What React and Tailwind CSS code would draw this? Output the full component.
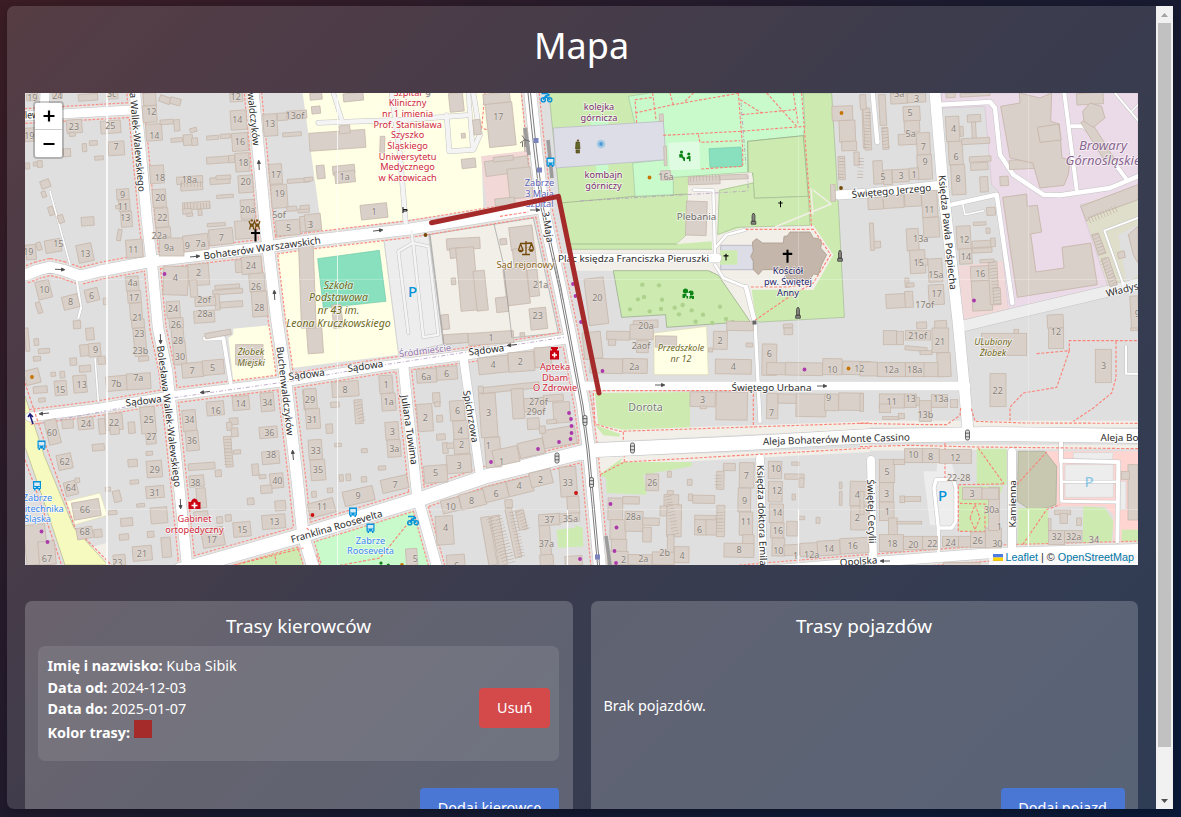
import React from "react";

// Map sections: every section keeps its own local units (three per pixel).
const at = (x, y) => `translate(${x} ${y}) scale(0.33333)`;

const AREAS = [
  { o: [20, 88], a: [
    ["#ffffe5", "640,722 748,712 760,730 640,740"],
  ] },
  { o: [300, 88], a: [
    ["#ffffe5", "8,15 66,430 550,365 545,205 680,190 662,15"],
    ["#f3d8d8", "543,205 680,188 700,335 560,358"],
    ["#ffffe5", "-70,495 250,455 295,800 -24,840"],
    ["#88e0be", "53,512 238,487 258,640 70,660", "#74c9a8"],
    ["#ededee", "252,457 385,440 432,768 296,798", "#c9c9c9"],
    ["#f2efe9", "388,440 700,390 775,735 430,770", "#a5a5a5"],
  ] },
  { o: [580, 88], a: [
    ["#f2efe9", "-25,478 415,470 520,600 540,705 505,702 395,550 -15,548"],
    ["#cdebb0", "-93,15 755,15 775,350 793,688 525,703 505,600 400,530 400,484 -25,484 -60,345", "#a3b894"],
    ["#cdebb0", "-60,345 165,325 325,318 320,440 290,468 -35,468", "#9aa88c"],
    ["#c8facc", "145,25 210,15 670,15 675,115 670,143 503,160 503,253 280,268 280,320 165,325 158,225 255,215 250,100 165,108", "#a5c4a0"],
    ["#cdebb0", "503,160 670,143 685,325 523,331 518,255 505,253", "#8fa283"],
    ["#c8facc", "30,90 85,90 85,255 50,255"],
    ["#dddde8", "-80,120 250,100 258,215 -72,240", "#b7b7c4"],
    ["#dffce2", "265,165 358,160 360,243 270,247"],
    ["#88e0be", "387,182 483,177 487,235 390,238", "#74c9a8"],
    ["#f2efe9", "325,268 515,253 520,283 418,305 413,440 480,420 497,418 497,386 520,386 520,416 700,412 760,500 700,606 515,605 528,700 505,700 400,550 395,460 290,468 320,440"],
    ["#cdebb0", "418,307 520,285 523,331 685,325 690,412 470,418 413,440", "#a9bd98"],
    ["#dddde8", "422,472 520,472 520,545 422,545", "#a9a9b8"],
    ["#cdebb0", "440,487 472,487 472,530 420,530 420,487"],
    ["#cdebb0", "100,548 385,548 415,562 510,700 260,718 257,680 125,688", "#8fa283"],
  ] },
  { o: [860, 88], a: [
    ["#ebdbe8", "245,15 834,15 834,310 660,350 745,600 445,675 430,520 415,310 395,290 375,55 245,60", "#d9c4d4"],
    ["#dfdecb", "663,352 834,290 834,580 748,602"],
    ["#e0dfdf", "775,440 834,410 834,560 800,590"],
    ["#f2d9d9", "295,535 428,518 445,675 310,700"],
  ] },
  { o: [20, 328], a: [
    ["#ffffe5", "625,30 660,5 770,-5 770,145 640,160"],
    ["#ffffe5", "138,520 240,495 262,562 165,590", "#e0dcb0"],
    ["#f2efe9", "180,665 260,645 262,712 215,712"],
    ["#cdebb0", "570,712 840,640 862,712"],
  ] },
  { o: [300, 328], a: [
    ["#c8facc", "40,640 350,545 400,712 60,712"],
    ["#cdebb0", "770,605 845,598 850,655 775,660"],
  ] },
  { o: [580, 328], a: [
    ["#ffffe5", "222,15 380,-5 385,140 222,140", "#dcd8b0"],
    ["#f2efe9", "40,185 330,192 870,280 870,302 50,342"],
    ["#dfdfdf", "330,190 870,190 870,280 330,298"],
    ["#cdebb0", "45,195 330,192 330,298 130,305 55,290"],
    ["#cdebb0", "45,290 120,318 118,326 70,322"],
    ["#f2efe9", "50,388 870,358 870,372 135,410 60,445"],
    ["#cdebb0", "58,440 130,388 120,402 335,402 335,415 190,440 200,500 80,495 78,450"],
    ["#cdebb0", "-15,590 8,600 10,650 0,660"],
  ] },
  { o: [860, 328], a: [
    ["#f2efe9", "0,278 834,278 834,298 0,298"],
    ["#f2efe9", "0,350 834,350 834,362 0,368"],
    ["#cdebb0", "350,362 440,362 440,470 350,470"],
    ["#ededee", "190,430 230,430 232,405 275,405 290,455 290,600 210,590"],
    ["#cdebb0", "297,475 430,475 375,610 297,610"],
    ["#ffd5d2", "555,370 834,370 834,640 760,645 760,560 735,535 590,535 590,415"],
    ["#c8c8b0", "475,370 555,370 590,415 588,530 560,540 510,545 472,520", "#a8a894"],
    ["#dfdfdf", "565,540 668,535 668,650 565,650"],
    ["#cdebb0", "475,540 565,540 565,650 472,660"],
    ["#cdebb0", "670,535 735,540 760,580 755,640 668,650"],
    ["#cdebb0", "785,605 834,605 834,640 785,640"],
    ["#ededee", "615,410 760,410 760,508 615,508", "#d4d4d4"],
    ["#ededee", "640,374 760,374 756,395 640,392", "#d4d4d4"],
    ["#ededee", "780,460 798,460 798,545 780,545", "#d4d4d4"],
  ] },
];

// Streets in page pixels: [width, points, hasSidewalk, colour]
const STREETS = [
  [9, "25,116 131,110", 1],
  [9, "45,93 44,114", 0],
  [11, "963,326 1000,317 1138,284", 0, "#ededed"],
  [10, "740,573 860,563 993,553 1138,549", 1],
  [10.5, "135,93 147,221 152,265 158,328 167,371 180,495 187,565", 1],
  [11.5, "253,93 265,221 277,321 283,361 297,478 303,535 313,567", 1],
  [9, "30,417 100,408 170,396 290,381 383,366 467,355 566,339", 1],
  [10, "403,363 417,495 437,567", 1],
  [8.5, "463,355 480,475", 0],
  [8, "760,458 763,567", 0],
  [8, "871,460 873,560", 0],
  [8, "1012,452 1012,558", 0],
  [9, "838,195 870,193 942,185", 0],
  [9, "553,258 717,258", 0],
  [9, "580,386 700,386 966,386", 0],
  [11, "935,93 943,188 958,321 965,395 968,431", 0],
  [11, "25,275 38,270 50,267 63,270 80,276 100,271 153,261 267,247 300,242 410,229 545,207", 1],
  [14, "180,570 293,538 423,498 487,476 583,452", 1],
  [14, "583,453 597,450 747,443 870,436 990,434 1140,436", 0],
  [12, "530,90 536,150 543,208 560,288 570,335 583,405 589,450 595,515 600,568", 1],
];

const SERVICE = [
  [4.5, [860, 88], "240,50 390,42 405,60 420,200 460,260 550,320 600,322 750,300 834,265"],
  [4, [860, 88], "650,305 613,15"],
  [4, [860, 88], "635,115 670,115 700,140 800,275"],
  [2, [860, 88], "765,15 834,98"],
  [1.5, [860, 88], "815,70 834,50"],
  [4.5, [860, 88], "275,350 410,320 457,645"],
  [1.6, [860, 88], "308,348 315,380 370,368"],
  [2, [860, 88], "834,390 733,428 790,590"],
  [4.5, [860, 88], "38,15 52,162"],
  [4, [20, 328], "555,32 610,30 632,165"],
  [1.6, [20, 328], "225,90 235,220"],
  [1.6, [20, 88], "90,310 150,530"],
  [2.2, [20, 88], "170,575 183,660 175,690"],
  [4.5, [300, 88], "55,104 320,95 500,82"],
  [4, [300, 88], "100,15 125,95"],
  [4.5, [300, 88], "275,15 300,200 317,405"],
  [4.5, [300, 88], "440,82 448,190 520,185 540,140 520,15"],
  [4, [300, 88], "505,15 518,180"],
  [2.6, [300, 88], "335,430 338,465 295,490 325,735"],
  [2.6, [300, 88], "338,465 385,475 415,740 370,748 340,470"],
  [2.6, [580, 88], "342,305 400,307 405,500"],
  [2.6, [580, 88], "405,480 440,440 497,425"],
  [2.6, [580, 88], "405,530 430,570 497,597"],
  [4.5, [580, 88], "498,597 525,705"],
  [3.4, [580, 328], "525,-20 540,280"],
  [4, [860, 328], "603,345 603,398 775,402 772,640"],
  [3, [860, 328], "603,400 605,520 770,522"],
  [2.5, [860, 328], "605,461 770,461"],
  [3.5, [860, 328], "235,670 235,600 222,480 228,455 280,455 288,480 288,580 275,600 235,600"],
  [2, [860, 328], "798,55 798,137 834,137"],
];

const FOOT = [
  { o: [300, 88], p: ["555,15 545,120 560,125", "600,385 685,372"] },
  { o: [580, 88], p: [
    "665,15 695,420", "250,142 480,130 675,115", "355,140 360,163 480,158", "475,15 488,180 488,235 362,243",
    "218,15 228,95", "170,105 165,35 218,28", "165,75 280,50 480,15", "270,15 280,50", "480,35 545,75", "485,80 645,65", "560,15 650,115", "640,15 655,110",
    "315,40 340,15", "497,424 700,424 752,500 700,585 625,597 510,597", "525,697 625,628 690,590"] },
  { o: [580, 328], p: ["40,188 520,188 520,298", "40,195 45,288 120,310 870,285", "130,312 130,340", "60,440 133,402 870,360", "133,402 133,385"] },
  { o: [860, 328], p: ["0,286 200,290 260,290 300,262 302,240", "334,242 345,280 500,285 834,286", "0,356 150,352 350,357 834,362", "530,77 628,68 628,38 834,38", "628,68 590,178 490,195 450,237 450,285", "768,40 768,150 755,195 700,240 640,280", "255,345 255,450", "355,360 432,468", "295,470 430,468", "295,475 295,610 375,610 375,528 300,526", "330,570 345,530 360,570 345,605 330,570", "470,470 560,372", "488,650 560,545 600,530"] },
  { o: [300, 328], p: ["345,560 240,690 120,712", "50,680 60,712", "20,600 30,610"] },
  { o: [20, 328], p: ["15,165 75,345 165,600 275,712", "15,395 60,520 125,712", "640,712 850,660", "765,685 770,712"] },
];

const B = [
  { o: [20, 88], r: -4, b: "20,18,34,20;97,15,30,18;175,18,58,20;262,15,32,18;140,95,46,40;148,133,18,12;242,98,60,38;265,160,48,42;208,158,24,14;187,167,13,24;224,204,26,12;130,182,22,24;15,120,32,40;15,225,14,18;40,222,12,12;52,218,15,20;62,276,28,24,-20;65,310,13,18,-20;86,356,15,26,-18;114,381,17,24,-18;184,387,38,26;290,303,37,32;296,335,34,34;303,370,33,47;287,352,16,10;292,424,12,34,10;318,455,50,54;75,455,48,38,-10;50,463,14,24,-18;18,470,30,45;172,468,46,54,-12;50,578,42,54,-14;128,622,48,40,-14;196,602,40,38,-14;50,642,14,34,-18;250,630,12,20;318,565,38,44;323,608,40,36;330,645,36,50;335,694,38,26;370,15,38,38;368,53,42,50;378,108,48,50;390,232,42,54;398,304,40,54;405,360,40,58;410,418,42,30;418,450,74,54,0;490,440,75,48,-7;567,422,72,48,-6;645,398,60,54,-4;418,25,34,20,20;450,30,32,20,15;420,95,40,14;462,95,17,34;510,120,20,12,-14;453,150,35,12;490,140,28,32;515,150,18,22;560,143,36,12;601,138,30,13;560,206,66,20;626,202,18,22;570,268,60,20;588,262,44,12;470,265,78,22;482,285,66,22;488,342,82,22;488,362,28,16;500,375,18,10;534,364,12,18;590,320,50,10;562,405,54,10;630,15,38,26;632,67,48,58;636,135,48,54;646,195,42,56;655,262,44,52;662,335,42,58;730,78,42,66;772,75,32,22;800,68,60,24;788,133,56,12;748,228,38,60;754,290,48,70;802,272,68,12;800,355,30,14;834,362,34,12;768,396,72,46;840,385,32,46;430,535,74,86,2;505,528,62,64;510,575,22,52;646,515,30,38;665,506,60,52;688,556,46,54;696,610,46,76;585,590,74,12;578,604,90,14;585,618,14,48;600,640,68,18;525,628,62,26;522,668,62,36;440,640,40,50;448,690,42,30;160,698,22,24" },
  { o: [300, 88], r: -6, b: "30,15,36,20;130,15,60,24;35,55,26,22;28,130,168,54,-4;118,112,32,24;50,232,24,40;98,232,66,26;105,250,60,34;182,348,80,44;240,145,14,50,2;448,15,42,56;550,15,80,32;562,45,80,130;485,212,42,28;484,136,12,14;520,95,22,45;555,212,130,45,-8;580,205,60,14;625,240,70,90;585,330,60,22;440,450,100,34,-3;450,480,30,30;475,478,54,190,-5;525,548,34,120;600,452,20,18;630,415,70,70,-7;640,480,68,60;615,540,70,110,-7;685,545,30,80;588,628,36,44;690,660,50,64;0,470,44,250,-2;98,650,28,70;454,570,13,20;425,680,22,44;12,268,26,12;15,378,48,50;0,352,28,12;672,120,12,70,-3" },
  { o: [580, 88], r: -2, b: "756,54,62,44;778,97,48,65;785,160,45,28;848,60,16,120;843,28,12,30;775,205,20,70;822,192,16,40;752,290,14,50;318,340,62,102,2;325,265,95,24;420,260,82,14;238,78,12,22;252,175,8,58;242,248,30,28;20,570,58,140,-7;160,697,74,22;450,708,60,12;610,708,28,12" },
  { o: [860, 88], r: -3, b: "92,15,50,32;142,15,55,28;130,55,50,44;133,98,46,34;115,138,62,32;170,134,40,66;172,200,44,74;40,218,28,70;70,246,26,44;97,244,50,38;148,240,28,34;12,60,20,126;0,20,18,44;58,20,20,92;67,118,18,66;258,85,40,76;266,160,42,70;274,230,42,90;300,115,10,30;322,80,40,22;336,102,12,60;305,150,84,18;328,205,65,16;332,224,52,22;360,266,24,46;420,265,25,28;380,358,26,24;24,328,46,36;70,322,62,38;134,315,50,40;186,308,46,80;190,388,48,60;140,422,36,66;150,486,46,70;176,512,28,20;205,512,42,70;30,405,12,82;42,460,20,20;135,570,12,28;140,585,22,12;206,590,46,60;78,618,58,42;135,610,24,48;170,702,30,20;224,698,36,24;290,414,42,70;298,482,38,46;336,458,58,20;392,450,14,26;338,480,58,14;340,402,38,10;378,420,12,16;332,534,55,46;336,578,60,90;388,520,26,130;400,600,22,50;360,514,42,10;258,15,28,14;300,15,90,10;562,680,48,40;812,624,24,100;448,215,78,28;650,15,80,34;700,85,28,150,-32" },
  { o: [20, 328], r: -5, b: "15,0,12,70;42,32,14,20;40,85,22,14;55,62,34,14;15,124,44,44,-14;40,175,42,20;56,210,20,12;93,133,14,12;120,130,14,20;150,90,20,22;178,112,34,20;104,158,36,44;160,142,40,52;198,0,24,36;180,50,28,34;206,46,36,40;234,85,22,24;258,144,64,44;320,136,72,48,-3;342,0,36,84;356,85,30,14;455,0,36,42;460,40,38,70;486,104,64,44;548,96,64,44;555,10,78,16,-10;647,50,82,60,0;80,275,36,74,-14;126,275,34,26;174,268,46,36;236,272,20,46;256,256,52,50;270,295,28,24;325,282,20,34;362,236,44,80;378,316,30,32;112,378,44,46,-12;134,460,38,42,-14;165,450,14,14;217,348,36,20;324,394,28,22;380,398,46,50;378,370,20,12;378,474,54,36;330,456,26,12;256,478,16,12;280,488,22,34,-14;265,548,26,12;350,527,24,10;392,538,50,48;302,570,36,24;298,618,28,18;382,610,20,18;158,518,82,52,-10;170,598,48,34,-10;222,604,24,24;425,628,28,60;338,654,58,44;280,680,36,32;488,246,40,64;498,308,38,60;560,220,52,42;638,204,50,42;722,194,40,56;628,270,26,20;620,283,16,24;634,300,20,26;614,325,22,92;640,366,22,12;718,296,54,34;726,370,52,38;696,408,20,34;718,440,20,12;750,436,40,44;722,472,34,24;505,405,80,20,-4;586,426,18,20;508,442,44,34;530,480,28,60;546,600,66,56,-10;640,582,52,44;726,560,70,42;682,510,20,20;590,566,18,20;616,560,18,20;765,518,32,30;522,550,42,20;15,590,65,120,-6;56,640,50,70;850,185,26,60" },
  { o: [300, 328], r: -4, b: "22,0,46,76;12,182,38,60;18,242,42,60;26,335,40,60;32,395,44,62;96,160,80,46;92,222,26,16;164,215,24,72;78,288,20,28;104,346,20,10;184,362,18,12;238,142,40,54;245,196,42,52;256,282,40,54;262,335,40,52;130,482,92,44,-13;244,448,80,40,-13;26,518,78,44,-15;118,440,12,20;138,438,14,20;184,446,16,16;235,414,22,12;35,490,14,18;82,480,16,14;350,122,60,42;410,115,62,40;352,228,46,82;398,194,22,32;404,222,16,14;410,262,18,20;410,318,26,18;428,344,16,32;440,345,24,16;450,218,44,60;460,278,44,56;462,333,46,44;440,380,74,55;372,412,70,52;535,86,90,50,-6;625,72,78,58;704,58,50,60;548,170,170,18,-6;535,175,15,20;540,196,50,132;556,328,46,90;580,360,76,48,-12;656,338,76,46,-13;728,300,100,54,-10;636,182,36,90;672,210,60,40;730,200,60,20;760,222,50,62;682,270,36,34;740,275,30,12;718,294,18,22;425,512,56,40,-14;480,492,76,46,-14;552,470,72,46,-14;622,452,76,46,-14;690,428,66,44,-14;780,416,50,90;802,505,36,54;408,564,52,86;440,680,54,34;318,662,34,50;554,566,26,146,-10;584,562,26,150,-10;630,540,20,150,-12;652,545,24,60,-12;615,515,22,24;716,558,64,34;778,556,60,26;720,592,32,90;720,680,40,32;795,684,52,28;430,18,74,28;505,12,136,36,-4;660,14,14,12" },
  { o: [580, 328], r: 1, b: "10,12,55,80,-6;80,10,70,26;85,34,22,18;30,92,98,44;128,92,74,44;150,-10,70,44;170,38,35,36;226,24,64,34;400,10,42,54;386,60,12,12;498,45,20,12;406,94,108,44;612,0,26,20;440,-20,80,28;546,48,44,94;560,104,60,36;616,104,112,38;728,92,58,48;788,100,84,40;330,192,76,44;408,192,94,84;360,234,20,8;560,196,34,76;594,198,56,28;648,198,90,68;734,198,42,50;776,195,74,52;198,438,38,50;262,430,12,18;322,454,14,18;430,406,36,22;410,430,22,54;338,502,66,24;325,498,12,20;478,404,44,76;474,480,38,72;478,552,40,70;488,620,34,30;432,646,90,42;344,562,64,18;344,575,36,46;378,575,32,46;410,532,24,94;262,488,18,14;252,500,44,34;260,530,44,96;240,534,20,30;262,620,20,72;84,510,44,66;128,506,50,22;90,575,48,60;135,550,54,60;188,570,50,22;188,598,26,44;94,634,46,42;82,670,62,40;145,680,72,30;217,672,66,38;283,656,44,48;565,400,40,52;565,460,42,62;568,528,42,56;572,584,40,46;576,630,38,54;635,402,22,10;614,438,58,16;656,450,16,28;636,498,10,18;620,580,32,44;656,565,18,10;708,568,12,18;778,462,8,20;778,490,8,42;810,460,60,74;812,534,56,72;612,650,46,32,-3;660,645,54,40,-3;712,638,68,44,-3;780,630,86,46,-3" },
  { o: [860, 328], r: 0, b: "70,8,40,42;110,10,20,40;135,56,66,12,5;136,8,76,28;180,68,36,12;216,0,50,74;232,74,40,72,-3;0,102,52,42;52,104,84,42;136,104,58,42;192,104,42,42;0,196,10,54;58,198,75,42;58,228,34,26;133,198,36,40;168,208,10,24;178,218,36,62;214,200,48,38;271,215,22,24;68,266,50,8;115,256,18,16;365,16,135,66;462,4,14,12;566,0,45,62;390,137,48,99;706,64,48,100;812,0,22,8;58,394,46,70;100,394,34,16;58,464,42,58;58,522,44,56;86,570,26,60;110,580,75,8;120,504,14,20;134,506,48,14;134,362,54,42;188,362,50,42;238,364,96,42;58,620,72,50;130,625,60,40;188,625,44,40;248,625,48,32;296,625,36,32;332,612,44,46;376,600,48,60;386,478,32,130;308,478,58,36;366,480,50,34;566,608,48,42;614,608,52,36;565,572,8,36;584,546,48,14;600,556,22,30;650,570,14,22;804,410,30,166;784,430,24,24;250,704,110,14;0,490,12,70" },
];

const POLY = [
  [[580, 88], "517,462 530,452 548,465 610,465 612,445 622,444 630,432 690,432 700,450 716,452 725,465 722,480 740,500 725,530 715,560 700,558 690,575 640,575 620,572 612,545 548,545 535,560 520,545 520,520 512,505 520,490", "#c4b6ab", "#ad9b8d"],
  [[860, 88], "422,55 480,45 478,15 540,30 575,15 572,100 598,108 606,210 630,215 625,260 612,292 540,300 518,225 450,210", "#d9d0c9", "#c4b3a6"],
  [[860, 88], "532,118 596,108 604,156 540,163", "#d9d0c9", "#c4b3a6"],
  [[860, 88], "428,328 500,318 502,355 532,352 545,432 512,438 528,552 612,540 606,478 692,465 712,590 472,628", "#d9d0c9", "#c4b3a6"],
  [[860, 88], "668,70 690,45 725,55 735,90 700,118 672,100", "#d9d0c9", "#c4b3a6"],
  [[860, 88], "662,355 834,290 834,335 690,388 680,400", "#d9d0c9", "#c4b3a6"],
  [[860, 88], "695,440 715,435 738,495 716,502", "#d9d0c9", "#c4b3a6"],
  [[860, 88], "724,512 745,508 772,590 750,596", "#d9d0c9", "#c4b3a6"],
  [[860, 88], "772,494 792,488 796,508 776,512", "#d9d0c9", "#c4b3a6"],
  [[860, 88], "805,440 834,415 834,525 820,500", "#d9d0c9", "#c4b3a6"],
];

// House numbers: x, y, text
const NUM = [
  [[20, 88], "37,30,19;112,22,24;275,18,3c;162,117,23;271,113,25;288,177,7;28,142,19;308,320,9;309,356,11;316,388,13;115,466,15;25,492,19;196,497,13;340,484,11;73,606,10;152,641,8;215,624,6;338,584,4a;342,628,17;352,690,21;394,70,12;403,143,14;420,270,18;421,329,20;427,388,22;418,444,22a;447,480,9a;502,474,9;542,467,7a;604,449,7;508,276,18a;647,27,12;652,95,14;660,162,16;670,225,18;677,280,20;683,365,20a;750,107,13;825,82,13of;768,259,17;779,318,19;777,381,5of;806,418,5;868,410,3;466,569,4;536,554,2;552,636,2of;555,678,28a;459,662,24;468,709,26;693,534,24;708,597,26;718,658,28"],
  [[300, 88], "134,265,1a;222,371,1;32,409,3;595,86,17;722,591,21a;713,684,23;384,18,9"],
  [[580, 88], "258,266,16a;52,628,20;198,713,20a"],
  [[860, 88], "118,18,3a;170,32,3;150,73,5;152,138,5a;190,176,7;195,222,9;69,266,5;123,264,3;162,260,1;281,123,4;288,207,6;294,272,8;208,366,11;182,453,13a;176,523,15;228,560,15a;230,618,17;194,649,17of;313,456,12;318,505,14;361,556,16;832,678,9"],
  [[20, 328], "227,66,9;358,16,23;361,69,23b;474,38,28;480,86,30;516,127,7;578,118,5;121,184,15;185,170,13;289,168,7b;355,150,7a;96,314,60;198,288,24;282,283,22;386,275,25;394,325,27;134,402,62;153,479,64;404,425,29;404,493,31;195,546,66;194,611,68;81,692,67;366,676,21;292,703,23;508,275,34;516,337,36;587,248,16;662,226,14;742,223,34;748,314,36;753,380,38;772,459,40;526,465,38;575,634,17;667,606,15;763,582,13"],
  [[300, 328], "30,215,29;36,275,31;47,367,33;54,426,35;135,184,8;258,169,1;266,222,1a;277,311,3;283,362,3a;174,503,9;285,471,7;66,536,11;379,146,6a;440,138,6;376,270,2;473,247,6;481,307,4;485,350,2;477,412,3;407,433,5;579,111,4;661,100,2;566,255,3;715,220,27of;708,250,29of;565,354,1;605,400,1;452,536,10;515,517,8;588,498,6;657,473,4;722,456,2;803,464,33;748,575,37;811,571,35a;739,648,37a;437,600,4;346,692,5;470,712,6;573,28,1"],
  [[580, 328], "183,54,2aof;163,117,2a;420,39,2;460,116,4;568,76,6;757,124,10;838,123,12;368,215,3;746,208,9;575,255,7;217,464,26;499,443,7;494,519,9;498,580,11;477,665,8;359,604,6;160,566,28a;131,694,2;190,692,2a;254,674,2b;306,682,4;588,421,10;591,487,12;592,555,14;594,607,16;595,668,10;647,682,1;695,679,12a;747,662,14;818,653,16;832,499,4;832,570,2"],
  [[860, 328], "173,22,21of;240,40,21;94,125,12a;164,125,18a;588,12,12;95,221,11;152,211,13;243,211,13a;196,261,13b;413,187,22;731,112,3;160,380,10;212,385,8;286,389,12;296,449,22-28;81,431,5;80,497,3;82,551,1;336,497,3;395,546,30a;418,596,1;97,647,18;160,649,20;217,646,22;272,643,24;353,638,26;412,646,30;590,627,32;641,627,32a;702,634,34"],
];

// Street names: x1,y1 -> x2,y2 baseline in page pixels
const NAMES = [
  ["lew", 25, 118.5, 39, 118],
  ["Bohaterów Warszawskich", 204, 259.5, 321, 243.5],
  ["a Wallek-Walewskiego", 129.5, 93, 138.5, 192],
  ["waldczyków", 247.5, 93, 253, 146],
  ["Bolesława Wallek-Walewskiego", 157, 346, 174.5, 487.5],
  ["Buchenwaldczyków", 276.5, 347, 287, 436],
  ["Sądowa", 126, 406.5, 162, 402],
  ["Sądowa", 289, 380, 325, 375.5],
  ["Sądowa", 348, 372, 383.5, 367],
  ["Sądowa", 469, 355.5, 504.5, 351],
  ["Franklina Roosevelta", 292, 543, 383, 516.5],
  ["Juliana Tuwima", 401, 395.5, 411, 465],
  ["Spichrzowa", 463, 391, 472, 443],
  ["3-Maja", 542, 212, 547, 243],
  ["Plac księdza Franciszka Pieruszki", 558, 262, 709, 262],
  ["Księdza Pawła Pośpiecha", 938.5, 175.5, 950, 290],
  ["Świętego Jerzego", 852, 198, 931.5, 191],
  ["Świętego Urbana", 731.5, 391, 811.5, 391],
  ["Aleja Bohaterów Monte Cassino", 763, 445, 910, 440.5],
  ["Aleja Bo", 1100.5, 441, 1138.5, 441],
  ["Władys", 1107, 297, 1139, 289],
  ["Księdza doktora Emila", 757, 465, 760, 566],
  ["Świętej Cecylii", 867, 479.5, 869, 543.5],
  ["Kamienna", 1016, 527.5, 1016, 480],
  ["Opolska", 840, 566, 877.5, 563.5],
];

// Points of interest: colour, size, leading, centre x, first baseline, lines, italic
const POIS = [
  ["#d0283c", 9.2, 10.67, 407.6, 95.6, ["Szpital", "Kliniczny", "nr 1 imienia", "Prof. Stanisława", "Szyszko", "Śląskiego", "Uniwersytetu", "Medycznego", "w Katowicach"]],
  ["#d0283c", 9.2, 10.6, 555, 370, ["Apteka", "Dbam", "O Zdrowie"]],
  ["#d0283c", 9.2, 10.6, 194.5, 522, ["Gabinet", "ortopedyczny"]],
  ["#8a6420", 9.2, 10.6, 525.5, 268, ["Sąd rejonowy"]],
  ["#5b61b5", 9.2, 10.6, 539.5, 186, ["Zabrze", "3 Maja", "Szpital"]],
  ["#3a88f0", 9.2, 10.6, 370.5, 543.5, ["Zabrze", "Roosevelta"]],
  ["#3a88f0", 9.2, 10.6, 37.5, 501, ["Zabrze", "Politechnika", "Śląska"]],
  ["#9078b0", 9.2, 10.6, 425.5, 354, ["Śródmieście"], 0, -7],
  ["#6f6a1c", 10.5, 12.9, 338.5, 288.5, ["Szkoła", "Podstawowa", "nr 43 im.", "Leona Kruczkowskiego"], 1],
  ["#6f6a1c", 9.1, 10.6, 251, 355, ["Żłobek", "Miejski"], 1],
  ["#6f6a1c", 9, 10.8, 681, 351, ["Przedszkole", "nr 12"], 1],
  ["#6f6a1c", 9, 10.6, 993, 345, ["ULubiony", "Żłobek"], 1],
  ["#7a2c70", 9.2, 10.6, 599, 110.3, ["kolejka", "górnicza"]],
  ["#7a2c70", 9.2, 10.6, 603.5, 178, ["kombajn", "górniczy"]],
  ["#6d6a68", 9.8, 10.6, 696.5, 220.3, ["Plebania"]],
  ["#24246b", 9.2, 10.8, 788, 274, ["Kościół", "pw. Świętej", "Anny"]],
  ["#7a7a78", 10.6, 12, 645.5, 411, ["Dorota"]],
  ["#8a6590", 13.1, 15.6, 1103, 149.5, ["Browary", "Górnośląskie"], 1],
];

const DOTS = "164.5,274,#ac39ac;974,300.5,#ac39ac;602.5,371,#ac39ac;804.5,369.5,#ac39ac;848.5,368.5,#c77400;32,377,#c77400;41.5,531.5,#ac39ac;47.5,542,#ac39ac;312.5,515,#c11;576,493,#c11;569,413,#ac39ac;571,419,#ac39ac;571.5,426,#ac39ac;571.5,433,#ac39ac;570.5,439,#ac39ac;559,442,#ac39ac;538,449,#ac39ac;491,462,#ac39ac;580,559,#ac39ac;610.5,504,#ac39ac;616.5,527.5,#ac39ac;614.5,551,#ac39ac;616,563,#ac39ac;573,284,#ac39ac;575.5,296,#ac39ac;581,322,#ac39ac;425.5,235,#734a08;841.5,113,#c77400;841,188,#734a08;649.5,177.5,#c77400;601,144,#2a7fd4;402,565,#c77400";

const Label = ({ n }) => {
  const [t, x1, y1, x2, y2] = n;
  const len = Math.hypot(x2 - x1, y2 - y1);
  const ang = (Math.atan2(y2 - y1, x2 - x1) * 180) / Math.PI;
  return (
    <text transform={`translate(${x1} ${y1}) rotate(${ang})`} textLength={len} fontSize="9.8" fill="#2c2c2c" stroke="#fff" strokeOpacity="0.8" strokeWidth="1.8" paintOrder="stroke" lengthAdjust="spacingAndGlyphs">{t}</text>
  );
};

const Arrow = ({ x, y, r }) => (
  <path transform={`translate(${x} ${y}) rotate(${r})`} d="M-5 0H2M1.5 -1.5L4.8 0L1.5 1.5Z" stroke="#4a4a4a" strokeWidth="0.9" fill="#4a4a4a" />
);
const Bus = ({ x, y }) => (
  <g transform={`translate(${x} ${y})`} fill="#0092da">
    <path d="M-4 -4.5H4V3.5H3V5H1.5V3.5H-1.5V5H-3V3.5H-4Z" />
    <path d="M-2.8 -3H2.8V0.5H-2.8Z" fill="#d9eaf4" />
    <path d="M-2.8 1.5H-1.4V2.5H-2.8ZM1.4 1.5H2.8V2.5H1.4Z" fill="#fff" />
  </g>
);
const Cross = ({ x, y, s = 1 }) => (
  <path transform={`translate(${x} ${y}) scale(${s})`} d="M-1 -6H1V-3H4.5V-1H1V6.5H-1V-1H-4.5V-3H-1Z" fill="#000" />
);
const Lights = ({ x, y }) => (
  <g transform={`translate(${x} ${y})`} fill="none" stroke="#555" strokeWidth="0.9">
    <rect x="-2" y="-5" width="4" height="10" rx="1.6" fill="#ddd" />
    <path d="M-2 -1.8H2M-2 1.8H2" />
  </g>
);
const Obelisk = ({ x, y }) => (
  <g transform={`translate(${x} ${y})`} stroke="#444" strokeWidth="0.9" fill="#8a8a80">
    <path d="M-0.6 -5.5H0.6L1.4 -3.500V2H-1.4V-3.500Z" />
    <path d="M-2.3 2.500H2.3V5.2H-2.3Z" />
  </g>
);
const Play = ({ x, y }) => (
  <g transform={`translate(${x} ${y})`} fill="#0c8416">
    <circle cx="-3" cy="-4" r="1.6" /><circle cx="4.3" cy="-2" r="1.6" />
    <path d="M-5.5 -1.5L-2.5 -2.5L-1 1L0.5 1.5V5H-1L-1.5 3L-3 1.5L-5 1.8ZM2 1.8L4 0H6V5.2H4.5V3H2Z" />
  </g>
);
const Trees = ({ x, y }) => (
  <g transform={`translate(${x} ${y})`} fill="#0c8416">
    <circle cx="-2.500" cy="-3" r="2.600" /><circle cx="3" cy="-1" r="2.600" />
    <path d="M-5.500 0H0V4.500H-1.500V2.500H-3V4H-5.500ZM1.500 2H6V5H4V4H2.500V5H1.500Z" />
    <path d="M-1.500 -1H2V2H-1.500Z" fill="#d8f5d8" />
  </g>
);
const Hands = ({ x, y }) => (
  <g transform={`translate(${x} ${y})`} fill="none" stroke="#734a08" strokeWidth="1.2">
    <path d="M-5.5 -3L-4.5 0H-1L0 -3L1 0H4.5L5.5 -3M-4 0V2L-5 5.5M-1.5 0V2L-0.7 5.5M-2.7 0V3M1.5 0V2L0.7 5.5M4 0V2L5 5.5M2.7 0V3" />
    <path d="M-2.8 -4.6V-2.4M2.8 -4.6V-2.4" strokeWidth="2.2" />
  </g>
);
const Scooter = ({ x, y }) => (
  <g transform={`translate(${x} ${y})`} fill="none" stroke="#0092da" strokeWidth="1.4">
    <circle cx="-3.2" cy="2.8" r="2.1" /><circle cx="3.2" cy="2.8" r="2.1" />
    <path d="M-3.2 2.8L-1 -1L3.2 2.8M-5 -3.5H0L3 -2M-1 -1L2.5 -1.5" />
  </g>
);

function MapDrawing() {
  return (
    <svg viewBox="25 93 1113 472" className="block h-[472px] w-full" fontFamily="'Noto Sans','Open Sans',sans-serif">
      <rect x="25" y="93" width="1113" height="472" fill="#dfdfdf" />
      {AREAS.map((s, i) => (
        <g key={i} transform={at(...s.o)}>
          {s.a.map(([f, p, st], j) => <polygon key={j} points={p} fill={f} stroke={st || "none"} strokeWidth="2" />)}
        </g>
      ))}
      <g fill="#aed18e">
        {"187,590 237,592 192,627 174,634 246,635 150,664 209,670 243,663 284,659 308,651 335,667 297,679 369,680 420,656 347,701 397,705 438,693 458,702".split(" ").map((c) => {
          const [x, y] = c.split(",").map(Number);
          return <circle key={c} cx={580 + x / 3} cy={88 + y / 3} r="2.2" />;
        })}
      </g>
      <path d="M25 396L44 455L74 528L108 565H65L40 490L25 447Z" fill="#f7fabf" stroke="#bcbf94" strokeWidth="0.8" />
      <g fill="none" strokeLinejoin="round">
        {STREETS.filter((s) => s[2]).map(([w, p], i) => <polyline key={i} points={p} stroke="#fa9085" strokeWidth={w + 7} strokeDasharray="2.6 1.6" />)}
        {STREETS.filter((s) => s[2]).map(([w, p], i) => <polyline key={i} points={p} stroke="#e6e3e1" strokeWidth={w + 4.6} />)}
        {STREETS.map(([w, p], i) => <polyline key={i} points={p} stroke="#c4c4c4" strokeWidth={w + 1} strokeLinecap="round" />)}
        {SERVICE.map(([w, o, p], i) => <polyline key={i} points={p} transform={at(...o)} stroke="#c4c4c4" strokeWidth={w * 3 + 3} strokeLinecap="round" />)}
        {STREETS.map(([w, p, , c], i) => <polyline key={i} points={p} stroke={c || "#fff"} strokeWidth={w} strokeLinecap="round" />)}
        {SERVICE.map(([w, o, p], i) => <polyline key={i} points={p} transform={at(...o)} stroke={i > 12 && i < 20 ? "#f4f4f4" : "#fff"} strokeWidth={w * 3} strokeLinecap="round" />)}
        <path d="M813 190L831 204L775 227M811 188L813 215" stroke="#f2efe9" strokeWidth="1.4" />
      </g>
      {FOOT.map((s, i) => (
        <g key={i} transform={at(...s.o)} fill="none" stroke="#fa8478" strokeWidth="3.4" strokeDasharray="9 5">
          {s.p.map((p, j) => <polyline key={j} points={p} />)}
        </g>
      ))}
      <g fill="none" stroke="#b39ac0" strokeWidth="0.8" strokeDasharray="4 2 1 2">
        <path d="M42 423L100 412L172 398L292 381L383 365L467 352L566 337" />
        <path d="M580 201L748 191V173M741 103L746 166" />
      </g>
      {B.map((s, i) => (
        <g key={i} transform={at(...s.o)} fill="#d9d0c9" stroke="#c7b8ac" strokeWidth="2.4">
          {s.b.split(";").map((q, j) => {
            const [x, y, w, h, r] = q.split(",").map(Number);
            return <rect key={j} x={x} y={y} width={w} height={h} transform={`rotate(${r === undefined ? s.r : r} ${x + w / 2} ${y + h / 2})`} />;
          })}
        </g>
      ))}
      {POLY.map(([o, p, f, s], i) => <polygon key={i} transform={at(...o)} points={p} fill={f} stroke={s} strokeWidth="2.4" />)}
      <g stroke="#c0afa2" strokeWidth="3.4" strokeDasharray="0.6 2.6" fill="none">
        <path d="M868 112L867 150M884 128L887 149M861 158L860 180M842 158L841 180M181 184H202M184 206H210M690 179L720 177" strokeWidth="6" />
        <path d="M490 518L506 563M498 516L512 563M512 512L522 558M519 511L527 530M228 439L228 465M357 402L363 423M668 496L676 535M720 509L720 534M718 475V488M1089 220L1118 208M992 262L998 304M1095 235L1103 255M1103 260L1115 284" strokeWidth="7" />
      </g>

      <g fill="none" stroke="#6e6e6e" strokeWidth="0.9">
        <path d="M528 93L534 150L541 208L559 288L568 335L581 405L587 450L593 515L597.5 565" />
        <path d="M530.5 93L536.5 150L543.5 208L561 288L570 335L583 405L589 450L595 515L599.5 565" />
        <path d="M525 128L529 155M548 140L552 178M606 536L610 565" stroke="#9b9b9b" strokeWidth="3.6" />
        <path d="M430 234L444 345M494 224L503 262L512 338M553 258L563 300" stroke="#909090" strokeWidth="0.6" />
      </g>
      <g fill="#7b83bd">
        <rect x="533.5" y="138" width="5" height="5" /><rect x="537" y="167.5" width="5" height="5" /><rect x="595" y="554.5" width="5" height="5" />
      </g>
      <g fill="none" stroke="#fff">
        <path d="M107 93V565" strokeWidth="1.6" /><path d="M337.5 93V565" strokeWidth="0.9" opacity="0.8" />
        <path d="M567.5 510V565M798.5 510V565M1028.5 510V565" strokeWidth="1.2" />
        <path d="M25 279.5H1138M25 509.5H1138M798.5 93V510M1028.5 93V510" strokeWidth="0.7" opacity="0.35" />
      </g>

      {NUM.map(([o, s], i) => (
        <g key={i} transform={at(...o)} fontSize="27" fill="#858079" textAnchor="middle" stroke="#e6dfda" strokeWidth="3" paintOrder="stroke">
          {s.split(";").map((q, j) => {
            const [x, y, t] = q.split(",");
            return <text key={j} x={x} y={Number(y) + 10}>{t}</text>;
          })}
        </g>
      ))}
      {NAMES.map((n, i) => <Label key={i} n={n} />)}
      {POIS.map(([c, s, l, x, y, lines, it, r], i) => (
        <g key={i} fill={c} fontSize={s} fontStyle={it ? "italic" : "normal"} textAnchor="middle" stroke="#fff" strokeOpacity="0.65" strokeWidth="1.6" paintOrder="stroke" transform={r ? `rotate(${r} ${x} ${y})` : undefined}>
          {lines.map((t, j) => <text key={j} x={x} y={y + j * l}>{t}</text>)}
        </g>
      ))}
      {DOTS.split(";").map((d, i) => {
        const [x, y, c] = d.split(",");
        return <circle key={i} cx={x} cy={y} r="1.9" fill={c} />;
      })}
      <circle cx="601" cy="144" r="4.3" fill="#6db7dc" opacity="0.5" />
      <g fontWeight="500" fontSize="15" fill="#0092da" textAnchor="middle">
        <text x="412.5" y="297">P</text><text x="942.5" y="501">P</text><text x="1089" y="486.5" opacity="0.4">P</text>
      </g>
      <Arrow x="60" y="269.5" r="3" /><Arrow x="195" y="256.5" r="-5" /><Arrow x="378" y="230.5" r="-7" /><Arrow x="535" y="210" r="0" />
      <Arrow x="259" y="165" r="-93" /><Arrow x="274.5" y="295" r="-93" /><Arrow x="160.5" y="339" r="88" /><Arrow x="180.5" y="504" r="88" />
      <Arrow x="44" y="413.5" r="175" /><Arrow x="205" y="392" r="173" /><Arrow x="293" y="455" r="-95" /><Arrow x="512" y="345" r="174" />
      <Arrow x="660" y="385" r="0" /><Arrow x="822" y="386" r="0" /><Arrow x="885" y="561" r="180" />
      <path d="M30 415L33 424M28 417L30 414L33 417" stroke="#1a1a7a" strokeWidth="1.5" fill="none" />
      <Bus x="41.5" y="445" /><Bus x="37" y="485.5" /><Bus x="353" y="512" /><Bus x="370.5" y="528" /><Bus x="550.5" y="162" />
      <Cross x="255.5" y="235" /><Cross x="787.5" y="256" s={1.05} /><Cross x="726" y="257" s={0.55} /><Cross x="780.5" y="204" s={0.5} />
      <Lights x="585" y="420.5" /><Lights x="632.5" y="448" /><Lights x="591.5" y="482.5" /><Lights x="557" y="458" /><Lights x="967.5" y="435" />
      <Obelisk x="753.5" y="219" /><Obelisk x="840" y="256" /><Obelisk x="798" y="313" />
      <Play x="684.5" y="156" /><Trees x="688" y="294" /><Play x="384" y="567" />
      <Hands x="254.5" y="224" /><Scooter x="546.5" y="97" /><Scooter x="413" y="520" />
      <g stroke="#734a08" fill="none" strokeWidth="1.3">
        <path d="M526 241V254M522 254.5H530M520 243.5L532 243M520.5 244L518.5 250M520.5 244L523 250M531.5 243L529.5 249M531.5 243L533.5 249" />
        <path d="M518 250H523.5L522 252H519.5ZM528.5 249.5H534L532.5 251.5H530Z" fill="#734a08" strokeWidth="0.5" />
      </g>
      <g>
        <path d="M188.500 502H191Q192 498.500 194.500 498.500Q197 498.500 198 502H200.500V509H188.500Z" fill="#cc0011" />
        <path d="M191.500 505.500H197.500M194.500 502.500V508.500" stroke="#fff" strokeWidth="1.700" />
        <path d="M551 347H558V349H557V350.500H559V359.500H550V350.500H552V349H551Z" fill="#cc0011" />
        <path d="M552 355H557M554.500 352.500V357.500" stroke="#fff" strokeWidth="1.500" />
      </g>
      <path d="M576 142H579.5L580 149H575.5ZM577 141L578 139.5L579 141ZM576 150H579.5V153H576Z" fill="#5d6a2a" stroke="#5a3a0a" strokeWidth="0.6" />
      <path d="M525 147V139.5L520 143M525 139.5L530 141.5M525 139.5L522 135.5M522.5 147V142" fill="none" stroke="#666" strokeWidth="0.9" />
      <path d="M403 207V213M403 209.5H407V211H403" stroke="#111" fill="none" strokeWidth="1" />
      <rect x="752.5" y="320.5" width="4" height="4" fill="#666" />

      <polyline points="431.5,222.7 558.5,196.4 599,393" fill="none" stroke="#a52a2a" strokeWidth="5" strokeLinecap="round" strokeLinejoin="round" />
    </svg>
  );
}

function MapView() {
  return (
    <div className="relative h-[472px] shrink-0 overflow-hidden">
      <MapDrawing />
      <div className="absolute left-[8px] top-[8px] flex w-[31px] flex-col rounded-[4px] border-2 border-black/20 bg-clip-padding text-black">
        <button className="flex h-[27px] items-center justify-center rounded-t-[2px] border-b border-[#ccc] bg-white">
          <svg viewBox="0 0 12 12" className="size-3"><path d="M6 0.5V11.5M0.5 6H11.5" stroke="#000" strokeWidth="2.2" /></svg>
        </button>
        <button className="flex h-[27px] items-center justify-center rounded-b-[2px] bg-white">
          <svg viewBox="0 0 12 12" className="size-3"><path d="M0.5 6H11.5" stroke="#000" strokeWidth="2.2" /></svg>
        </button>
      </div>
      <div className="absolute bottom-0 right-0 flex h-[16px] items-center bg-white/80 px-[4px] font-['Liberation_Sans',sans-serif] text-[10.8px] leading-[15px] text-[#333]">
        <svg viewBox="0 0 12 8" className="mr-[3px] h-[7px] w-[10px]" preserveAspectRatio="none">
          <path fill="#4C7BE1" d="M0 0h12v4H0z" /><path fill="#FFD500" d="M0 4h12v3H0z" /><path fill="#E0BC00" d="M0 7h12v1H0z" />
        </svg>
        <span className="whitespace-pre"><span className="text-[#0078a8]">Leaflet</span> | © <span className="text-[#0078a8]">OpenStreetMap</span></span>
      </div>
    </div>
  );
}

function Card({ title, action, children }) {
  return (
    <section className="flex h-[252px] flex-1 flex-col rounded-[7px] bg-white/20 pl-[13px] pr-[13.5px] pt-[11px]">
      <h2 className="mb-[6px] text-center text-[18.9px] leading-[28px]">{title}</h2>
      <div className="h-[142px] shrink-0">{children}</div>
      <button className="h-[40px] shrink-0 self-end rounded-[4px] bg-[#4a76d4] px-[17.700px]">{action}</button>
    </section>
  );
}

function Field({ name, children }) {
  return <p><span className="font-bold">{name}</span> {children}</p>;
}

function ScrollBar() {
  return (
    <div className="flex w-[17px] shrink-0 flex-col items-center bg-[#f1f1f1]">
      <div className="flex h-[17px] items-center"><svg viewBox="0 0 7 4" className="h-1 w-[7px]"><path d="M0 4L3.5 0L7 4Z" fill="#a3a3a3" /></svg></div>
      <div className="h-[724px] w-[13px] bg-[#c1c1c1]" />
      <div className="grow" />
      <div className="flex h-[17px] items-center"><svg viewBox="0 0 7 4" className="h-1 w-[7px]"><path d="M0 0L3.5 4L7 0Z" fill="#505050" /></svg></div>
    </div>
  );
}

export default function App() {
  return (
    <div className="h-[817px] w-[1181px] overflow-hidden bg-[linear-gradient(135deg,#3a1c24_0%,#1a1a2e_50%,#0a1a38_100%)] pb-[8px] pl-[7px] pr-[8px] pt-[6px] font-['Noto_Sans','Open_Sans',sans-serif] text-[14.4px] leading-[21.6px] text-white">
      <div className="flex h-[803px] overflow-hidden rounded-l-[7px] bg-white/15 shadow-[0_4px_8px_rgba(0,0,0,0.2)]">
        <main className="flex min-w-0 flex-1 flex-col overflow-hidden px-[18px]">
          <h1 className="mb-[27px] mt-[20px] shrink-0 text-center text-[36px] leading-[40px]">Mapa</h1>
          <MapView />
          <div className="mt-[36px] flex shrink-0 gap-[18px]">
            <Card title="Trasy kierowców" action="Dodaj kierowcę">
              <div className="flex h-[115px] items-center justify-between rounded-[7px] bg-white/10 px-[9px]">
                <div className="self-start pl-[0.5px] pt-[9px]">
                  <Field name="Imię i nazwisko:">Kuba Sibik</Field>
                  <Field name="Data od:">2024-12-03</Field>
                  <Field name="Data do:">2025-01-07</Field>
                  <Field name="Kolor trasy:"><span className="inline-block size-[18px] bg-[#a52a2a]" /></Field>
                </div>
                <button className="mt-[8px] h-[40px] rounded-[4px] bg-[#d44a4a] px-[17.700px]">Usuń</button>
              </div>
            </Card>
            <Card title="Trasy pojazdów" action="Dodaj pojazd">
              <div className="flex h-[120px] items-center">Brak pojazdów.</div>
            </Card>
          </div>
        </main>
        <ScrollBar />
      </div>
    </div>
  );
}
